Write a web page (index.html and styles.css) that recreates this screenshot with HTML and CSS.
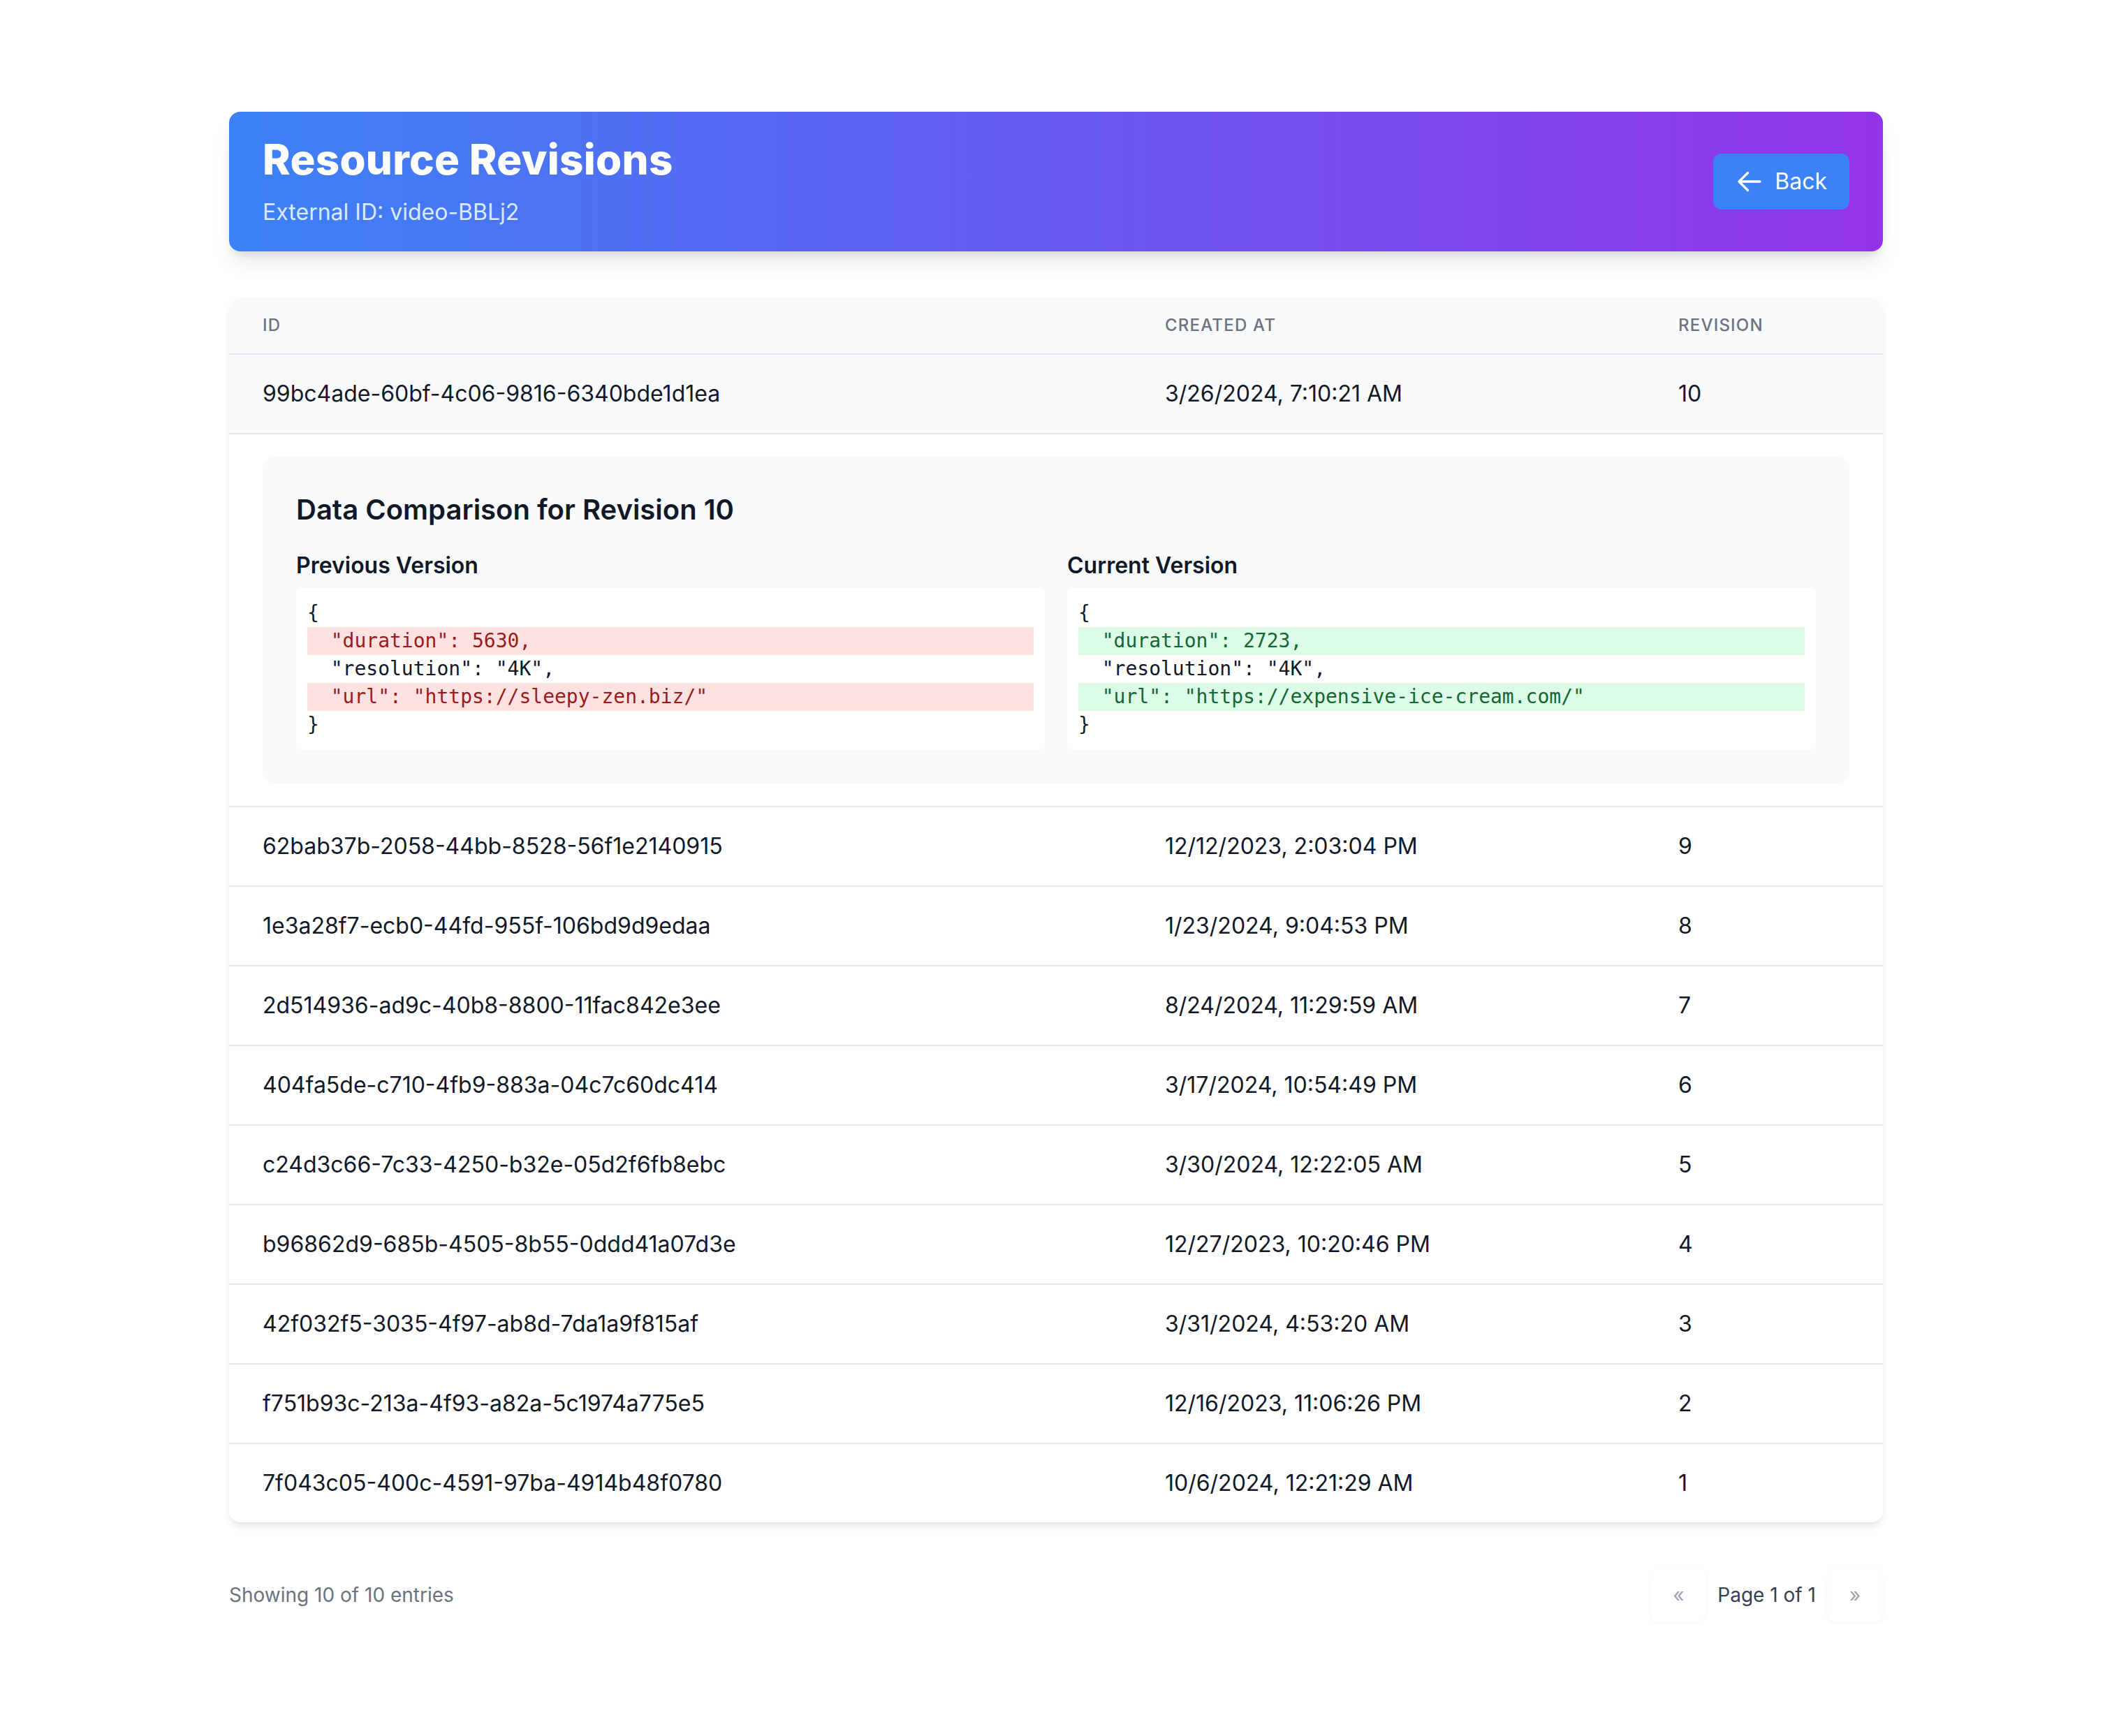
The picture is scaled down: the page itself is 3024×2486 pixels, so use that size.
FILE: index.html
```html
<!DOCTYPE html>
<html lang="en">
<head>
<meta charset="utf-8">
<title>Resource Revisions</title>
<link rel="stylesheet" href="styles.css">
</head>
<body>
<div class="page">
  <header class="hero">
    <div class="hero-text">
      <h1 class="hero-title">Resource Revisions</h1>
      <p class="hero-sub">External ID: video-BBLj2</p>
    </div>
    <button class="back-btn" type="button">
      <svg class="back-icon" viewBox="0 0 24 24" fill="none" stroke="currentColor" stroke-width="2" stroke-linecap="round" stroke-linejoin="round"><path d="M10.5 19.5 3 12m0 0 7.5-7.5M3 12h18"/></svg>
      <span>Back</span>
    </button>
  </header>

  <div class="table-card">
    <table class="rev-table">
      <colgroup>
        <col class="col-id">
        <col class="col-date">
        <col class="col-rev">
      </colgroup>
      <thead>
        <tr>
          <th>ID</th>
          <th>Created At</th>
          <th>Revision</th>
        </tr>
      </thead>
      <tbody>
        <tr class="row selected">
          <td>99bc4ade-60bf-4c06-9816-6340bde1d1ea</td>
          <td>3/26/2024, 7:10:21 AM</td>
          <td>10</td>
        </tr>
        <tr class="detail-row">
          <td colspan="3" class="detail-cell">
            <div class="compare">
              <h3 class="compare-title">Data Comparison for Revision 10</h3>
              <div class="compare-grid">
                <div class="compare-col">
                  <h4 class="compare-head">Previous Version</h4>
                  <div class="code">
                    <div class="code-line">{</div>
                    <div class="code-line removed">  "duration": 5630,</div>
                    <div class="code-line">  "resolution": "4K",</div>
                    <div class="code-line removed">  "url": "https://sleepy-zen.biz/"</div>
                    <div class="code-line">}</div>
                  </div>
                </div>
                <div class="compare-col">
                  <h4 class="compare-head">Current Version</h4>
                  <div class="code">
                    <div class="code-line">{</div>
                    <div class="code-line added">  "duration": 2723,</div>
                    <div class="code-line">  "resolution": "4K",</div>
                    <div class="code-line added">  "url": "https://expensive-ice-cream.com/"</div>
                    <div class="code-line">}</div>
                  </div>
                </div>
              </div>
            </div>
          </td>
        </tr>
        <tr class="row"><td>62bab37b-2058-44bb-8528-56f1e2140915</td><td>12/12/2023, 2:03:04 PM</td><td>9</td></tr>
        <tr class="row"><td>1e3a28f7-ecb0-44fd-955f-106bd9d9edaa</td><td>1/23/2024, 9:04:53 PM</td><td>8</td></tr>
        <tr class="row"><td>2d514936-ad9c-40b8-8800-11fac842e3ee</td><td>8/24/2024, 11:29:59 AM</td><td>7</td></tr>
        <tr class="row"><td>404fa5de-c710-4fb9-883a-04c7c60dc414</td><td>3/17/2024, 10:54:49 PM</td><td>6</td></tr>
        <tr class="row"><td>c24d3c66-7c33-4250-b32e-05d2f6fb8ebc</td><td>3/30/2024, 12:22:05 AM</td><td>5</td></tr>
        <tr class="row"><td>b96862d9-685b-4505-8b55-0ddd41a07d3e</td><td>12/27/2023, 10:20:46 PM</td><td>4</td></tr>
        <tr class="row"><td>42f032f5-3035-4f97-ab8d-7da1a9f815af</td><td>3/31/2024, 4:53:20 AM</td><td>3</td></tr>
        <tr class="row"><td>f751b93c-213a-4f93-a82a-5c1974a775e5</td><td>12/16/2023, 11:06:26 PM</td><td>2</td></tr>
        <tr class="row"><td>7f043c05-400c-4591-97ba-4914b48f0780</td><td>10/6/2024, 12:21:29 AM</td><td>1</td></tr>
      </tbody>
    </table>
  </div>

  <footer class="footer">
    <span class="footer-count">Showing 10 of 10 entries</span>
    <div class="pager">
      <button class="pager-btn" type="button" disabled>&laquo;</button>
      <span class="pager-label">Page 1 of 1</span>
      <button class="pager-btn" type="button" disabled>&raquo;</button>
    </div>
  </footer>
</div>
</body>
</html>
```
FILE: styles.css
```css
* { box-sizing: border-box; }

html, body {
  margin: 0;
  padding: 0;
  background: #ffffff;
}

body {
  font-family: Inter, "Open Sans", "Liberation Sans", sans-serif;
  color: #111827;
}

.page {
  max-width: 2560px;
  margin: 0 auto;
  padding: 160px 96px 120px;
}

/* Header */
.hero {
  display: flex;
  align-items: center;
  justify-content: space-between;
  padding: 32px 48px;
  border-radius: 16px;
  background: linear-gradient(to right, #3b82f6, #9333ea);
  box-shadow: 0 20px 30px -6px rgba(0,0,0,0.10), 0 8px 12px -4px rgba(0,0,0,0.08);
  color: #ffffff;
}

.hero-title {
  margin: 0;
  font-size: 60px;
  line-height: 72px;
  font-weight: 800;
  letter-spacing: 0.005em;
}

.hero-sub {
  margin: 16px 0 0;
  font-size: 32px;
  line-height: 48px;
  color: #dbeafe;
}

.back-btn {
  display: flex;
  align-items: center;
  gap: 16px;
  padding: 16px 32px;
  border: 0;
  border-radius: 12px;
  background: #3b82f6;
  color: #ffffff;
  font-family: inherit;
  font-size: 32px;
  line-height: 48px;
  font-weight: 400;
}

.back-icon {
  width: 40px;
  height: 40px;
  display: block;
}

/* Table */
.table-card {
  margin-top: 66px;
  background: #ffffff;
  border-radius: 16px;
  overflow: hidden;
  box-shadow: 0 8px 12px -2px rgba(0,0,0,0.08), 0 4px 8px -4px rgba(0,0,0,0.08);
}

.rev-table {
  width: 100%;
  border-collapse: collapse;
  table-layout: fixed;
}

.col-id { width: 1292px; }
.col-date { width: 735px; }
.col-rev { width: 341px; }

.rev-table th {
  background: #f9fafb;
  padding: 24px 48px;
  text-align: left;
  font-size: 24px;
  line-height: 32px;
  font-weight: 500;
  letter-spacing: 0.05em;
  text-transform: uppercase;
  color: #6b7280;
  border-bottom: 2px solid #e5e7eb;
}

.rev-table td {
  padding: 32px 48px;
  font-size: 32px;
  line-height: 48px;
  color: #111827;
  white-space: nowrap;
}

.rev-table tbody tr + tr td {
  border-top: 2px solid #e5e7eb;
}

.row.selected td {
  background: #f9fafb;
}

.detail-cell {
  background: #ffffff;
}

.compare {
  background: #f9fafb;
  border-radius: 16px;
  padding: 48px;
}

.compare-title {
  margin: 0 0 28px;
  font-size: 40px;
  line-height: 56px;
  font-weight: 600;
  color: #111827;
}

.compare-grid {
  display: grid;
  grid-template-columns: 1fr 1fr;
  gap: 32px;
}

.compare-head {
  margin: 0 0 8px;
  font-size: 32px;
  line-height: 48px;
  font-weight: 600;
  color: #111827;
}

.code {
  background: #ffffff;
  border-radius: 8px;
  padding: 16px;
  font-family: "DejaVu Sans Mono", monospace;
  font-size: 28px;
  line-height: 40px;
  color: #111827;
}

.code-line {
  white-space: pre;
}

.code-line.removed {
  background: #fee2e2;
  color: #991b1b;
}

.code-line.added {
  background: #dcfce7;
  color: #166534;
}

/* Footer */
.footer {
  margin-top: 64px;
  display: flex;
  align-items: center;
  justify-content: space-between;
}

.footer-count {
  font-size: 28px;
  line-height: 40px;
  color: #6b7280;
}

.pager {
  display: flex;
  align-items: center;
  gap: 16px;
}

.pager-btn {
  width: 80px;
  height: 80px;
  border: 1px solid rgba(0,0,0,0.015);
  border-radius: 14px;
  background: #ffffff;
  box-shadow: 0 2px 4px rgba(0,0,0,0.03);
  color: #9ca3af;
  font-family: inherit;
  font-size: 28px;
  line-height: 40px;
  padding: 0;
}

.pager-label {
  font-size: 28px;
  line-height: 40px;
  color: #374151;
}
```
